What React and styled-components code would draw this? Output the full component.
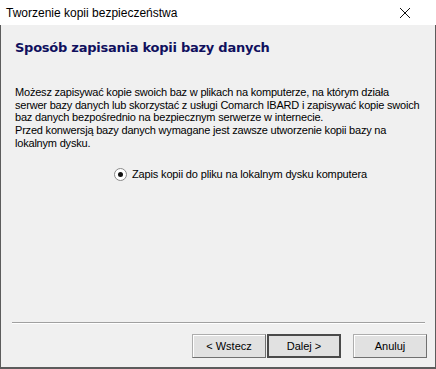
import styled, { createGlobalStyle } from 'styled-components';

const GlobalStyle = createGlobalStyle`
    html, body {
        margin: 0;
        padding: 0;
        background: #ffffff;
    }
    * {
        box-sizing: border-box;
    }
`;

const lines = [
    'Możesz zapisywać kopie swoich baz w plikach na komputerze, na którym działa',
    'serwer bazy danych lub skorzystać z usługi Comarch IBARD i zapisywać kopie swoich',
    'baz danych bezpośrednio na bezpiecznym serwerze w internecie.',
    'Przed konwersją bazy danych wymagane jest zawsze utworzenie kopii bazy na',
    'lokalnym dysku.',
];

const App = () => {
    return (
        <Window>
            <GlobalStyle />
            <TitleBar>
                <span>Tworzenie kopii bezpieczeństwa</span>
                <CloseButton aria-label="Zamknij">
                    <svg width="12" height="12" viewBox="0 0 12 12">
                        <path d="M1 1 L11 11 M11 1 L1 11" stroke="#111" strokeWidth="1" fill="none" />
                    </svg>
                </CloseButton>
            </TitleBar>

            <Frame>
                <Heading>Sposób zapisania kopii bazy danych</Heading>

                <Description>
                    {lines.map((line) => (
                        <Line key={line}>{line}</Line>
                    ))}
                </Description>

                <RadioRow>
                    <Radio checked />
                    <span>Zapis kopii do pliku na lokalnym dysku komputera</span>
                </RadioRow>

                <Separator />

                <ButtonBar>
                    <Button>&lt; Wstecz</Button>
                    <Button $default>Dalej &gt;</Button>
                    <Button $gap>Anuluj</Button>
                </ButtonBar>
            </Frame>
        </Window>
    );
};

const Window = styled.div`
    width: 436px;
    height: 369px;
    display: flex;
    flex-direction: column;
    font-family: "Liberation Sans", Arial, sans-serif;
    color: #000;
`;

const TitleBar = styled.div`
    height: 25px;
    background: #ffffff;
    display: flex;
    align-items: center;
    justify-content: space-between;
    padding: 0 0 0 6px;
    font-family: "Liberation Sans", Arial, sans-serif;
    font-size: 12px;
    color: #000;
`;

const CloseButton = styled.div`
    width: 46px;
    height: 25px;
    display: flex;
    align-items: center;
    justify-content: center;
    margin-right: 8px;
`;

const Frame = styled.div`
    flex: 1;
    display: flex;
    flex-direction: column;
    background: #f0f0f0;
    border: 1px solid #5c5c5c;
    border-top: none;
    border-bottom-width: 2px;
`;

const Heading = styled.h1`
    margin: 14px 0 0 14px;
    font-family: "DejaVu Sans", Verdana, sans-serif;
    font-weight: bold;
    font-size: 13px;
    letter-spacing: -0.25px;
    line-height: 18px;
    color: #10105e;
`;

const Description = styled.div`
    margin: 29px 0 0 14px;
    font-size: 11px;
    line-height: 12.7px;
    letter-spacing: -0.2px;
    color: #000;
`;

const Line = styled.div`
    white-space: nowrap;
`;

const RadioRow = styled.label`
    display: flex;
    align-items: center;
    gap: 5px;
    margin: 18px 0 0 113px;
    font-size: 11px;
    line-height: 13px;
    letter-spacing: -0.15px;
`;

const Radio = styled.span`
    width: 13px;
    height: 13px;
    border-radius: 50%;
    border: 1px solid #8a8a8a;
    background: #ffffff;
    display: flex;
    align-items: center;
    justify-content: center;

    &::after {
        content: '';
        width: 5px;
        height: 5px;
        border-radius: 50%;
        background: ${(props) => (props.checked ? '#111' : 'transparent')};
    }
`;

const Separator = styled.div`
    margin: auto 10px 0 11px;
    border-top: 1px solid #a0a0a0;
    border-bottom: 1px solid #ffffff;
`;

const ButtonBar = styled.div`
    display: flex;
    justify-content: flex-end;
    padding: 10px 8px 9px 0;
`;

const Button = styled.button`
    width: 74px;
    height: 24px;
    margin-left: ${(props) => (props.$gap ? '12px' : '1px')};
    font-family: "Liberation Sans", Arial, sans-serif;
    font-size: 11px;
    color: #000;
    background: #e1e1e1;
    border: ${(props) => (props.$default ? '2px solid #4a4a4a' : '1px solid #adadad')};
    border-right-color: ${(props) => (props.$default ? '#4a4a4a' : '#707070')};
    border-bottom-color: ${(props) => (props.$default ? '#4a4a4a' : '#707070')};
    border-radius: 0;
    padding: 0;
    box-shadow: ${(props) => (props.$default ? 'none' : 'inset 1px 1px 0 #ffffff')};
`;

export default App;
